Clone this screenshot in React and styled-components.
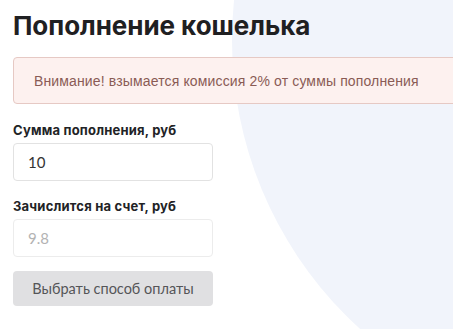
import React from "react";
import styled, { createGlobalStyle } from "styled-components";

const Global = createGlobalStyle`
  html, body { margin: 0; padding: 0; background: #ffffff; }
  body { overflow: hidden; }
  * { box-sizing: border-box; }
`;

const Page = styled.div`
  position: relative;
  width: 453px;
  height: 329px;
  overflow: hidden;
  background: #ffffff;
`;

const Blob = styled.div`
  position: absolute;
  left: 232px;
  top: -350px;
  width: 780px;
  height: 780px;
  border-radius: 50%;
  background: #f1f4fb;
`;

const Content = styled.div`
  position: relative;
  display: flex;
  flex-direction: column;
  padding: 10px 0 0 13px;
`;

const Title = styled.h1`
  margin: 0;
  font-family: Inter, "Noto Sans", sans-serif;
  font-weight: 700;
  font-size: 26px;
  line-height: 32px;
  color: #1f2022;
  letter-spacing: -0.05px;
`;

const Alert = styled.div`
  margin-top: 15px;
  width: 460px;
  height: 47px;
  display: flex;
  align-items: center;
  padding-left: 20px;
  background: #fdf1ef;
  border: 1px solid #e6c9c4;
  border-radius: 4px;
  font-family: "Liberation Sans", Arial, sans-serif;
  font-size: 14px;
  letter-spacing: 0.14px;
  color: #8a5b55;
`;

const Form = styled.div`
  display: flex;
  flex-direction: column;
  width: 200px;
`;

const Label = styled.label`
  margin-top: ${(p) => p.$top}px;
  font-family: Inter, "Noto Sans", sans-serif;
  font-weight: 700;
  font-size: 13px;
  line-height: 16px;
  letter-spacing: 0.2px;
  color: #222326;
`;

const Input = styled.input`
  margin-top: 5px;
  width: 200px;
  height: 38px;
  padding: 0 14px;
  border: 1px solid #e2e2e2;
  border-radius: 4px;
  background: #ffffff;
  font-family: Lato, sans-serif;
  font-size: 15px;
  color: #333333;
  outline: none;
  &::placeholder { color: #b3b3b3; }
  &:disabled { background: #ffffff; color: #b3b3b3; border-color: #ececec; }
`;

const Button = styled.button`
  margin-top: 14px;
  width: 200px;
  height: 35px;
  border: none;
  border-radius: 4px;
  background: #e0e0e2;
  font-family: Lato, sans-serif;
  font-size: 14.5px;
  color: #555558;
  cursor: default;
`;

export default function App() {
  return (
    <Page>
      <Global />
      <Blob />
      <Content>
        <Title>Пополнение кошелька</Title>
        <Alert>Внимание! взымается комиссия 2% от суммы пополнения</Alert>
        <Form>
          <Label $top={18}>Сумма пополнения, руб</Label>
          <Input defaultValue="10" />
          <Label $top={17}>Зачислится на счет, руб</Label>
          <Input disabled placeholder="9.8" />
          <Button disabled>Выбрать способ оплаты</Button>
        </Form>
      </Content>
    </Page>
  );
}
